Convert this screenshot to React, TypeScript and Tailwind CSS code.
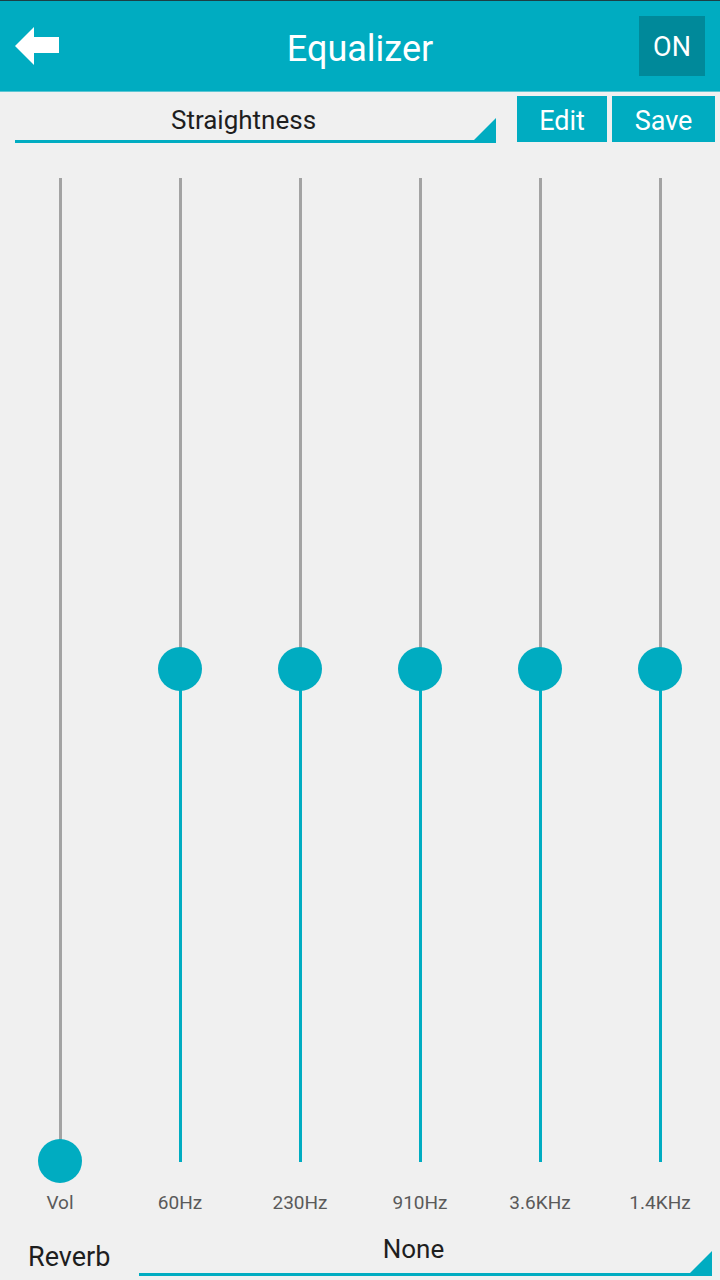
import React from 'react';

const bands = [
  { label: 'Vol', pos: 983, vol: true },
  { label: '60Hz', pos: 491 },
  { label: '230Hz', pos: 491 },
  { label: '910Hz', pos: 491 },
  { label: '3.6KHz', pos: 491 },
  { label: '1.4KHz', pos: 491 },
];

const TRACK = 984;

const Corner: React.FC<{ size: number }> = ({ size }) => (
  <svg width={size} height={size} viewBox="0 0 10 10" className="absolute right-0 bottom-0">
    <polygon points="10,0 10,10 0,10" fill="#00acc1" />
  </svg>
);

const App: React.FC = () => {
  return (
    <div className="w-[720px] h-[1280px] overflow-hidden bg-[#f0f0f0] font-['Roboto',sans-serif]">
      {/* Header */}
      <div className="h-[92px] bg-[#00acc1] border-t border-[#1c3f45] border-b border-b-[#5cc6d3] flex items-center">
        <div className="w-[81px] pl-[15px] flex items-center">
          <svg width="45" height="38" viewBox="0 0 45 38">
            <polygon points="0,19 19,0 19,10 44,10 44,26 19,26 19,38" fill="#ffffff" />
          </svg>
        </div>
        <div className="flex-1 text-center text-white text-[36px] leading-none pt-[5px]">Equalizer</div>
        <div className="w-[66px] h-[60px] mr-[15px] bg-[#00899a] flex items-center justify-center pt-[3px] text-white text-[27px]">
          ON
        </div>
      </div>

      {/* Preset row */}
      <div className="flex items-start pt-[4px] pl-[15px]">
        <div className="relative w-[481px] h-[47px] border-b-[3px] border-[#00acc1] flex items-center justify-center pr-[24px] pt-[5px] text-[26px] text-[#1e1e1e]">
          Straightness
          <Corner size={22} />
        </div>
        <button className="ml-[21px] w-[90px] h-[46px] bg-[#00acc1] text-white text-[27px] flex items-center justify-center pt-[5px]">
          Edit
        </button>
        <button className="ml-[5px] w-[103px] h-[46px] bg-[#00acc1] text-white text-[27px] flex items-center justify-center pt-[5px]">
          Save
        </button>
      </div>

      {/* Sliders */}
      <div className="grid grid-cols-6 mt-[35px]">
        {bands.map((b) => (
          <div key={b.label} className="flex flex-col items-center">
            <div className="relative w-[3px]" style={{ height: TRACK }}>
              <div className="absolute left-0 top-0 w-[3px] bg-[#a3a3a3]" style={{ height: b.pos }} />
              {!b.vol && (
                <div
                  className="absolute left-0 bottom-0 w-[3px] bg-[#00acc1]"
                  style={{ top: b.pos }}
                />
              )}
              <div
                className="absolute left-[1.5px] w-[44px] h-[44px] -ml-[22px] -mt-[22px] rounded-full bg-[#00acc1]"
                style={{ top: b.pos }}
              />
            </div>
            <div className="mt-[31px] h-[19px] text-[19px] text-[#5a5a5a] leading-none">{b.label}</div>
          </div>
        ))}
      </div>

      {/* Reverb */}
      <div className="flex items-end mt-[14px]">
        <div className="w-[139px] pl-[28px] text-[27px] text-[#1e1e1e] leading-none pb-[5px]">Reverb</div>
        <div className="relative w-[573px] h-[50px] border-b-[3px] border-[#00acc1] flex items-center justify-center pr-[24px] text-[26px] text-[#1e1e1e]">
          None
          <Corner size={22} />
        </div>
      </div>
    </div>
  );
};

export default App;
